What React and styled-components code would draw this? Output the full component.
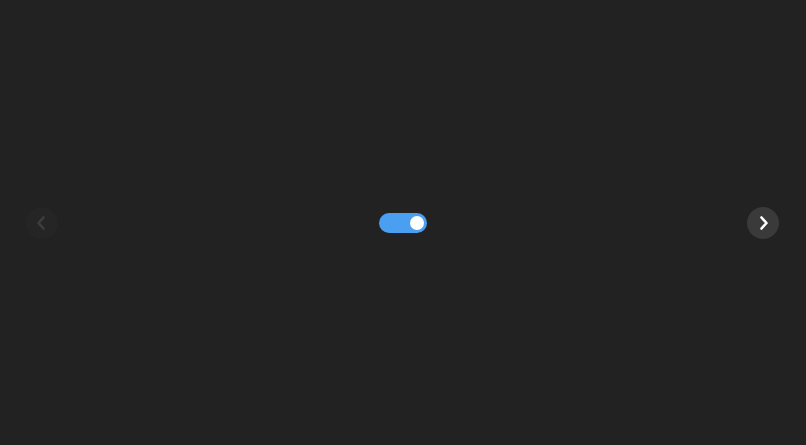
import React, { useState } from "react";
import styled, { createGlobalStyle } from "styled-components";

const Global = createGlobalStyle`
  html, body { margin: 0; padding: 0; background: #222222; }
  body { font-family: "Inter", "Liberation Sans", sans-serif; }
  #root { height: 100vh; }
`;

const Stage = styled.div`
  height: 445px;
  display: flex;
  align-items: center;
  justify-content: space-between;
  padding: 0 27px 0 26px;
  box-sizing: border-box;
  background: #222222;
`;

const NavButton = styled.button`
  width: 32px;
  height: 32px;
  border-radius: 50%;
  border: none;
  padding: 0;
  display: flex;
  align-items: center;
  justify-content: center;
  background: #3a3a3a;
  color: #ffffff;
  opacity: ${(p) => (p.disabled ? 0.12 : 1)};
  cursor: pointer;
  svg { display: block; }
`;

const Track = styled.button`
  width: 48px;
  height: 20px;
  border-radius: 10px;
  border: none;
  padding: 3px;
  box-sizing: border-box;
  display: flex;
  justify-content: ${(p) => (p.on ? "flex-end" : "flex-start")};
  align-items: center;
  background: ${(p) => (p.on ? "#4b9ff0" : "#555555")};
  cursor: pointer;
  margin-left: 1px;
`;

const Knob = styled.span`
  width: 14px;
  height: 14px;
  border-radius: 50%;
  background: #ffffff;
`;

const Chevron = ({ dir }) => (
  <svg width="24" height="24" viewBox="0 0 24 24" fill="none" stroke="currentColor"
    strokeWidth="2.6" strokeLinecap="round" strokeLinejoin="round"
    style={{ transform: dir === "left" ? "translateX(-1px)" : "translateX(1px)" }}>
    {dir === "left" ? <path d="M14.5 6.5 9.5 12l5 5.5" /> : <path d="M9.5 6.5l5 5.5-5 5.5" />}
  </svg>
);

export default function App() {
  const [on, setOn] = useState(true);
  return (
    <>
      <Global />
      <Stage>
        <NavButton disabled aria-label="Previous"><Chevron dir="left" /></NavButton>
        <Track on={on} onClick={() => setOn(!on)} aria-label="Toggle"><Knob /></Track>
        <NavButton aria-label="Next"><Chevron dir="right" /></NavButton>
      </Stage>
    </>
  );
}
